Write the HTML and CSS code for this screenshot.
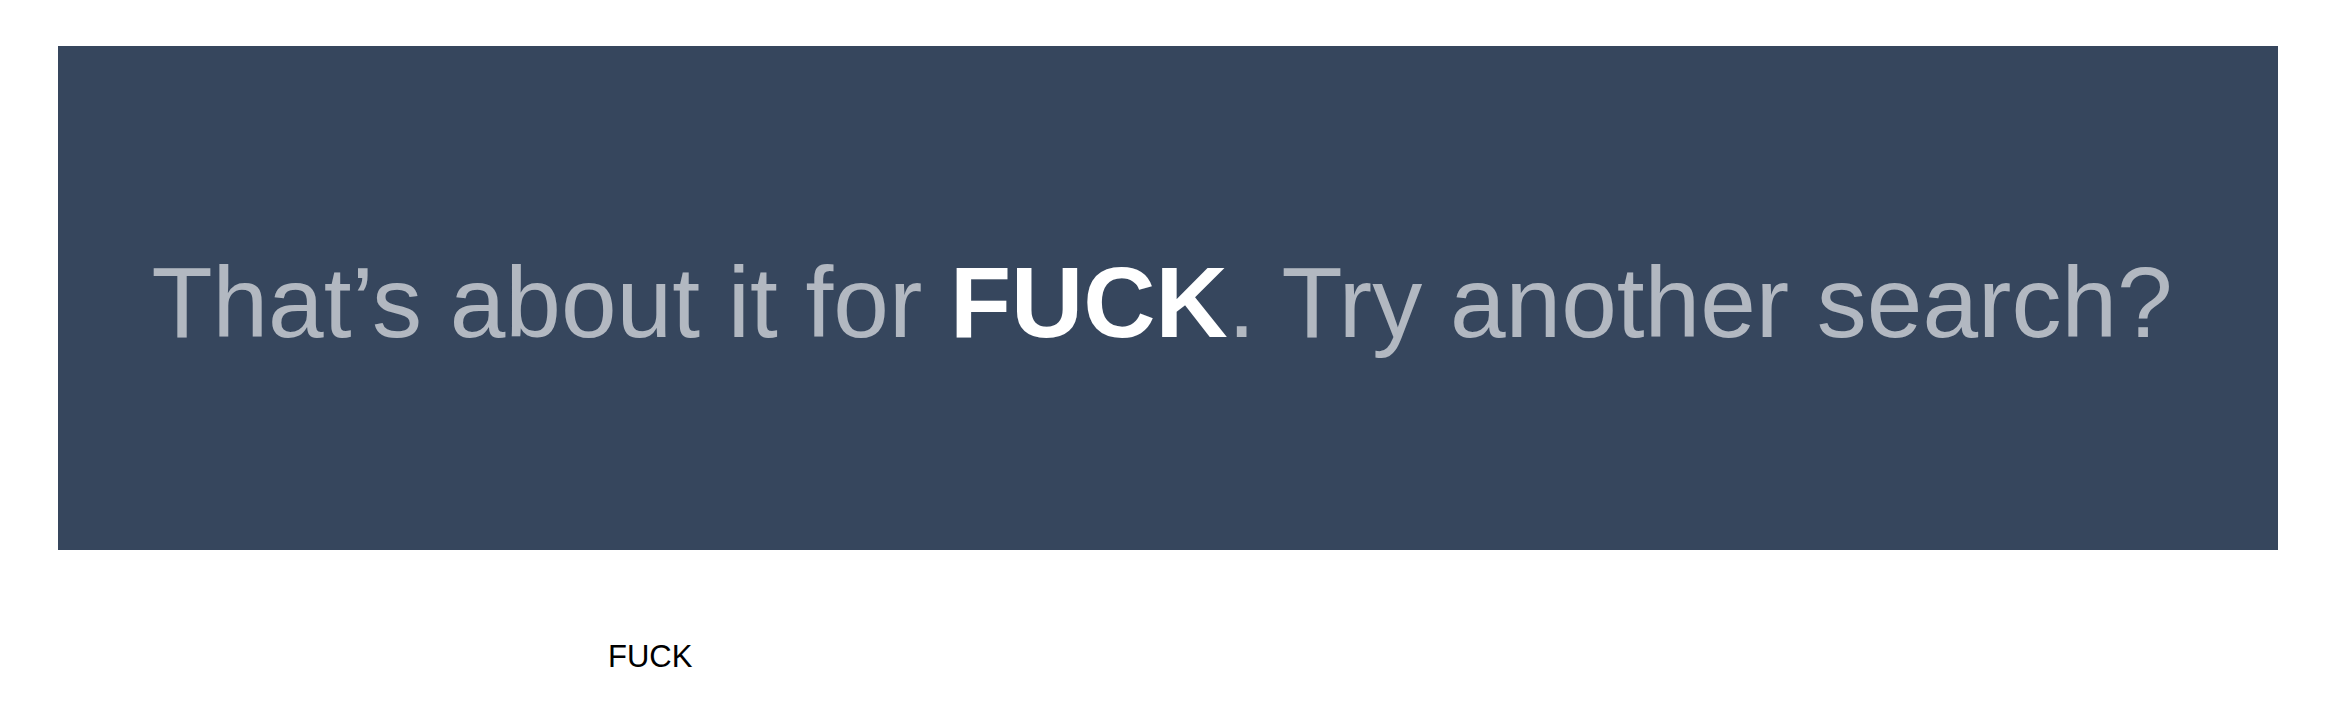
FILE: index.html
```html
<!DOCTYPE html>
<html>
<head>
<meta charset="utf-8">
<link rel="stylesheet" href="styles.css">
</head>
<body>
<div class="banner">
  <p class="message">That’s about it for <strong>FUCK</strong>. Try another search?</p>
</div>
<div class="term">FUCK</div>
</body>
</html>
```
FILE: styles.css
```css
html, body {
  margin: 0;
  padding: 0;
  background: #ffffff;
}
body {
  font-family: "Liberation Sans", Arial, sans-serif;
}
.banner {
  margin: 46px 0 0 58px;
  width: 2220px;
  height: 504px;
  background: #36465d;
  display: flex;
  align-items: center;
  justify-content: center;
}
.message {
  margin: 0;
  font-size: 100px;
  line-height: 100px;
  color: rgba(255, 255, 255, 0.62);
  white-space: nowrap;
  padding-top: 7px;
  padding-right: 12px;
}
.message strong {
  color: #ffffff;
  font-weight: bold;
}
.term {
  margin: 89px 0 0 608px;
  font-size: 31px;
  line-height: 36px;
  color: #000;
}
```
